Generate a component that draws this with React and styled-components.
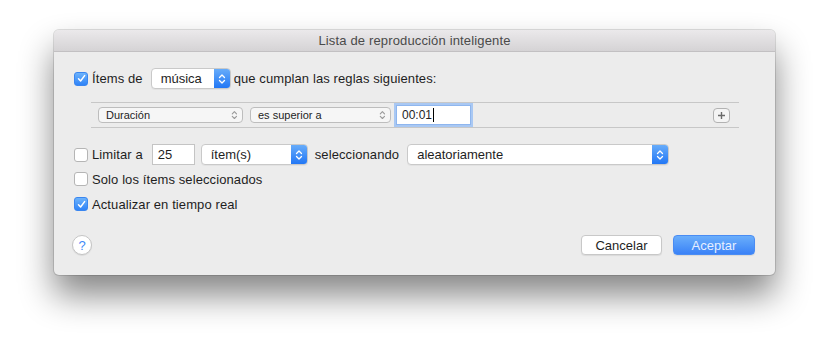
import styled, { createGlobalStyle } from "styled-components"

const Global = createGlobalStyle`
    html, body {
        margin: 0;
        padding: 0;
        background: #ffffff;
    }
    body {
        font-family: "Liberation Sans", Arial, sans-serif;
        font-size: 13px;
        color: #1e1e1e;
    }
`;

const Page = styled.div`
    width: 830px;
    height: 352px;
    padding: 30px 0 0 54px;
    box-sizing: border-box;
    overflow: hidden;
`;

const Window = styled.div`
    width: 721px;
    background: #ececec;
    border-radius: 5px;
    box-shadow: 0 0 0 1px rgba(0, 0, 0, 0.12), 0 20px 34px rgba(0, 0, 0, 0.48);
    overflow: hidden;
`;

const TitleBar = styled.div`
    height: 21px;
    display: flex;
    align-items: center;
    justify-content: center;
    background: linear-gradient(#ebe9eb, #d5d3d5);
    border-bottom: 1px solid #c2c0c2;
    color: #4a4a4a;
    font-size: 13px;
    letter-spacing: 0.15px;
`;

const Body = styled.div`
    padding: 16px 19px 20px 20px;
    display: flex;
    flex-direction: column;
`;

const Row = styled.div`
    display: flex;
    align-items: center;
    height: ${p => p.h || 21}px;
    margin-top: ${p => p.mt || 0}px;
`;

const Box = styled.span`
    width: 12px;
    height: 12px;
    border-radius: 3px;
    flex: none;
    display: flex;
    align-items: center;
    justify-content: center;
    background: ${p => p.checked ? "linear-gradient(#6db3fb, #2f83f7)" : "#ffffff"};
    border: 1px solid ${p => p.checked ? "#3a86f0" : "#b5b5b5"};
    margin-right: 4px;
`;

const Label = styled.span`
    white-space: nowrap;
    letter-spacing: 0.1px;
    margin-right: ${p => p.mr || 0}px;
`;

const Popup = styled.div`
    height: 21px;
    width: ${p => p.w}px;
    box-sizing: border-box;
    display: flex;
    align-items: stretch;
    background: #ffffff;
    border: 1px solid #c9c9c9;
    border-radius: 4px;
    overflow: hidden;
    margin-right: ${p => p.mr || 0}px;
    box-shadow: 0 1px 0 rgba(0, 0, 0, 0.04);
`;

const PopupText = styled.span`
    flex: 1;
    display: flex;
    align-items: center;
    padding-left: ${p => p.pl || 9}px;
`;

const Stepper = styled.span`
    width: 16px;
    display: flex;
    align-items: center;
    justify-content: center;
    background: linear-gradient(#67acfa, #2277f5);
`;

const SmallPopup = styled.div`
    height: 16px;
    width: ${p => p.w}px;
    box-sizing: border-box;
    display: flex;
    align-items: center;
    justify-content: space-between;
    padding: 0 4px 0 7px;
    background: #f6f6f6;
    border: 1px solid #bdbdbd;
    border-radius: 4px;
    font-size: 11px;
    margin-right: ${p => p.mr || 0}px;
`;

const Rules = styled.div`
    margin: 13px 17px 0 17px;
    height: 24px;
    border-top: 1px solid #c7c7c7;
    border-bottom: 1px solid #c7c7c7;
    display: flex;
    align-items: center;
    padding-left: 7px;
`;

const Field = styled.div`
    height: ${p => p.h || 21}px;
    width: ${p => p.w}px;
    box-sizing: border-box;
    display: flex;
    align-items: center;
    padding-left: ${p => p.pl || 4}px;
    background: #ffffff;
    border: 1px solid ${p => p.focus ? "#8fb6ee" : "#c4c4c4"};
    box-shadow: ${p => p.focus ? "0 0 0 2px #a9c8f3" : "none"};
    margin-right: ${p => p.mr || 0}px;
    font-size: ${p => p.fs || 13}px;
`;

const Caret = styled.span`
    width: 1px;
    height: 14px;
    background: #000;
    margin-left: 1px;
`;

const PlusButton = styled.div`
    margin-left: auto;
    margin-right: 9px;
    width: 17px;
    height: 15px;
    box-sizing: border-box;
    border: 1px solid #b2b2b2;
    border-radius: 4px;
    background: #f4f4f4;
    display: flex;
    align-items: center;
    justify-content: center;
`;

const Footer = styled.div`
    display: flex;
    align-items: center;
    margin-top: 21px;
`;

const Help = styled.div`
    width: 18px;
    height: 18px;
    margin-left: -2px;
    border-radius: 50%;
    background: #ffffff;
    border: 1px solid #c4c4c4;
    box-shadow: 0 1px 1px rgba(0, 0, 0, 0.08);
    color: #3d8af7;
    font-size: 13px;
    display: flex;
    align-items: center;
    justify-content: center;
`;

const Button = styled.div`
    height: 20px;
    width: ${p => p.w}px;
    box-sizing: border-box;
    display: flex;
    align-items: center;
    justify-content: center;
    border-radius: 4px;
    margin-left: ${p => p.ml || 0}px;
    background: ${p => p.primary ? "linear-gradient(#6aaefb, #3a82f7)" : "#ffffff"};
    border: 1px solid ${p => p.primary ? "#4a8cf3" : "#c8c8c8"};
    color: ${p => p.primary ? "#e6efff" : "#1e1e1e"};
    box-shadow: 0 1px 1px rgba(0, 0, 0, 0.08);
`;

const Check = () => (
    <svg width="9" height="9" viewBox="0 0 9 9">
        <path d="M1.5 4.8 L3.6 7 L7.6 1.6" fill="none" stroke="#fff" strokeWidth="1.5" strokeLinecap="round" strokeLinejoin="round" />
    </svg>
);

const Arrows = ({color = "#fff", size = 1}) => (
    <svg width={8 * size} height={12 * size} viewBox="0 0 8 12">
        <path d="M1.5 4.5 L4 2 L6.5 4.5 M1.5 7.5 L4 10 L6.5 7.5" fill="none" stroke={color} strokeWidth="1.3" strokeLinecap="round" strokeLinejoin="round" />
    </svg>
);

const CheckBox = ({checked}) => (
    <Box checked={checked}>{checked && <Check />}</Box>
);

const App = () => {
    return (
        <Page>
            <Global />
            <Window>
                <TitleBar>Lista de reproducción inteligente</TitleBar>
                <Body>
                    <Row>
                        <CheckBox checked />
                        <Label mr={8}>Ítems de</Label>
                        <Popup w={80} mr={3}>
                            <PopupText>música</PopupText>
                            <Stepper><Arrows /></Stepper>
                        </Popup>
                        <Label>que cumplan las reglas siguientes:</Label>
                    </Row>
                    <Rules>
                        <SmallPopup w={145} mr={7}>
                            <span>Duración</span>
                            <Arrows color="#9a9a9a" size={0.85} />
                        </SmallPopup>
                        <SmallPopup w={141} mr={5}>
                            <span>es superior a</span>
                            <Arrows color="#9a9a9a" size={0.85} />
                        </SmallPopup>
                        <Field w={75} h={20} focus fs={12} pl={5}>00:01<Caret /></Field>
                        <PlusButton>
                            <svg width="9" height="9" viewBox="0 0 9 9">
                                <path d="M4.5 1 V8 M1 4.5 H8" stroke="#6a6a6a" strokeWidth="1.4" />
                            </svg>
                        </PlusButton>
                    </Rules>
                    <Row mt={16}>
                        <CheckBox />
                        <Label mr={9}>Limitar a</Label>
                        <Field w={43} mr={6} pl={5}>25</Field>
                        <Popup w={107} mr={7}>
                            <PopupText>ítem(s)</PopupText>
                            <Stepper><Arrows /></Stepper>
                        </Popup>
                        <Label mr={8}>seleccionando</Label>
                        <Popup w={262}>
                            <PopupText>aleatoriamente</PopupText>
                            <Stepper><Arrows /></Stepper>
                        </Popup>
                    </Row>
                    <Row mt={4} h={20}>
                        <CheckBox />
                        <Label>Solo los ítems seleccionados</Label>
                    </Row>
                    <Row mt={5} h={20}>
                        <CheckBox checked />
                        <Label>Actualizar en tiempo real</Label>
                    </Row>
                    <Footer>
                        <Help>?</Help>
                        <Button w={81} ml={489}>Cancelar</Button>
                        <Button w={82} ml={11} primary>Aceptar</Button>
                    </Footer>
                </Body>
            </Window>
        </Page>
    )
}

export default App
